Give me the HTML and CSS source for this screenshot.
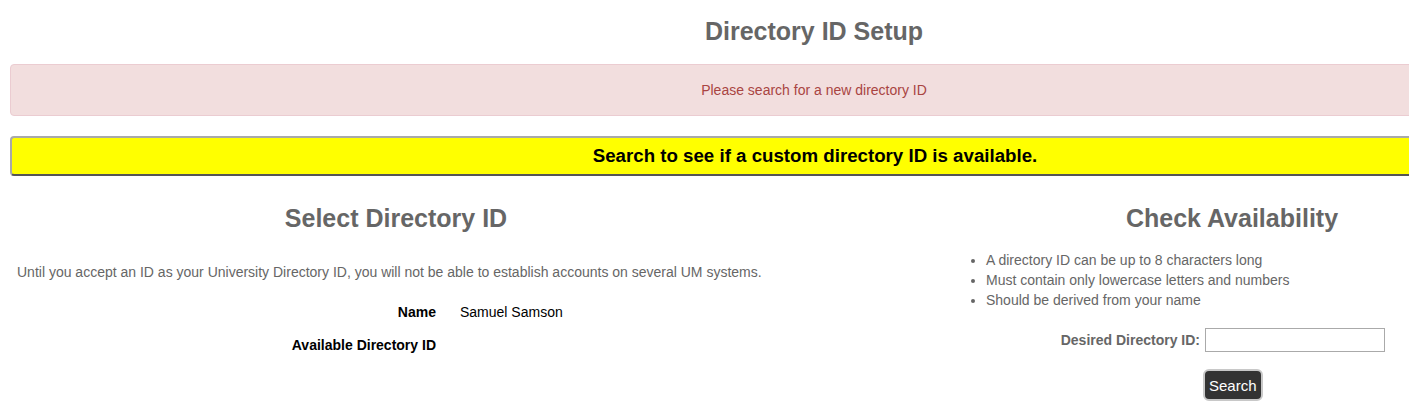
FILE: index.html
```html
<!DOCTYPE html>
<html>
<head>
<meta charset="utf-8">
<title>Directory ID Setup</title>
<link rel="stylesheet" href="styles.css">
</head>
<body>
<div class="page">
  <h1 class="page-title">Directory ID Setup</h1>
  <div class="alert">Please search for a new directory ID</div>
  <div class="banner">Search to see if a custom directory ID is available.</div>
  <div class="columns">
    <section class="col-left">
      <h2 class="col-title">Select Directory ID</h2>
      <p class="intro">Until you accept an ID as your University Directory ID, you will not be able to establish accounts on several UM systems.</p>
      <dl class="info">
        <div class="info-row"><dt>Name</dt><dd>Samuel Samson</dd></div>
        <div class="info-row"><dt>Available Directory ID</dt><dd></dd></div>
      </dl>
    </section>
    <section class="col-right">
      <h2 class="col-title">Check Availability</h2>
      <ul class="rules">
        <li>A directory ID can be up to 8 characters long</li>
        <li>Must contain only lowercase letters and numbers</li>
        <li>Should be derived from your name</li>
      </ul>
      <form class="search-form">
        <div class="form-row">
          <label class="form-label" for="did">Desired Directory ID:</label>
          <input class="form-input" id="did" type="text">
        </div>
        <div class="form-row">
          <span class="form-label"></span>
          <button class="btn" type="button">Search</button>
        </div>
      </form>
    </section>
  </div>
</div>
</body>
</html>
```

FILE: styles.css
```css
html, body {
  margin: 0;
  padding: 0;
  overflow: hidden;
  background: #fff;
}

body {
  font-family: "Liberation Sans", Arial, sans-serif;
  font-size: 14px;
  color: #666;
}

.page {
  width: 1608px;
  padding-left: 10px;
}

.page-title {
  margin: 17px 0 0;
  font-size: 25px;
  line-height: 28px;
  font-weight: bold;
  text-align: center;
  color: #666;
}

.alert {
  margin-top: 19px;
  height: 50px;
  box-sizing: content-box;
  border: 1px solid #ebccd1;
  border-radius: 4px;
  background: #f2dede;
  color: #a94442;
  font-size: 14px;
  line-height: 51px;
  text-align: center;
}

.banner {
  margin-top: 20px;
  height: 36px;
  border: 2px solid #a9a9a9;
  border-right: none;
  border-bottom-color: #555;
  border-radius: 4px 0 0 4px;
  background: #ffff00;
  color: #000;
  font-size: 18.7px;
  font-weight: bold;
  line-height: 35px;
  text-align: center;
}

.columns {
  display: grid;
  grid-template-columns: 772px 900px;
}

.col-left {
  padding: 0 7px;
}

.col-title {
  margin: 28px 0 0;
  font-size: 25px;
  line-height: 28px;
  font-weight: bold;
  text-align: center;
  color: #666;
}

.intro {
  margin: 31px 0 0;
  line-height: 18px;
}

.info {
  margin: 22px 0 0;
}

.info-row {
  display: flex;
  line-height: 18px;
  margin-bottom: 15px;
  color: #000;
}

.info-row dt {
  width: 419px;
  text-align: right;
  font-weight: bold;
}

.info-row dd {
  margin: 0 0 0 24px;
}

.rules {
  margin: 18px 0 0;
  padding-left: 204px;
  line-height: 20px;
}

.search-form {
  margin-top: 18px;
}

.form-row {
  display: flex;
  align-items: center;
  margin-bottom: 17px;
}

.form-label {
  width: 418px;
  text-align: right;
  font-weight: bold;
  color: #666;
  margin-right: 5px;
}

.form-input {
  width: 180px;
  height: 24px;
  box-sizing: border-box;
  margin: 0;
  border: 1px solid #aaa;
  padding: 2px 4px;
  font-family: inherit;
  font-size: 14px;
}

.btn {
  height: 32px;
  padding: 0 4px;
  margin: 0 0 0 -2px;
  border: 2px solid #c8c8c8;
  border-radius: 6px;
  background: #333;
  color: #fff;
  font-family: "Liberation Sans", Arial, sans-serif;
  font-size: 15px;
}
```
